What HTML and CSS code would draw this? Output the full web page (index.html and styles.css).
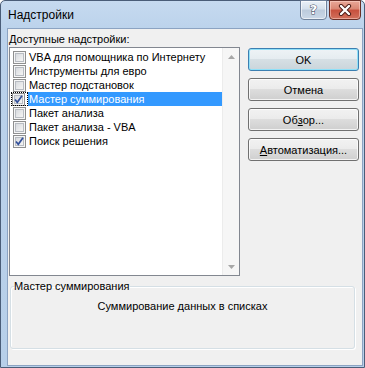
FILE: index.html
```html
<!DOCTYPE html>
<html lang="ru">
<head>
<meta charset="utf-8">
<title>Надстройки</title>
<link rel="stylesheet" href="styles.css">
</head>
<body>
<div class="window">
  <div class="titlebar">
    <span class="title">Надстройки</span>
    <div class="caption-btns">
      <div class="cbtn help"><span class="qmark">?</span></div>
      <div class="cbtn close">
        <svg width="16" height="12" viewBox="0 0 16 12"><path d="M4 2 L12 10 M12 2 L4 10" fill="none" stroke="#4a1a14" stroke-width="4.2" stroke-linecap="round"/><path d="M4 2 L12 10 M12 2 L4 10" fill="none" stroke="#ffffff" stroke-width="2.4" stroke-linecap="round"/></svg>
      </div>
    </div>
  </div>
  <div class="client">
    <div class="top">
      <div class="left">
        <div class="label"><u>Д</u>оступные надстройки:</div>
        <div class="listbox">
          <ul class="items">
            <li class="item"><span class="cb"></span><span class="txt">VBA для помощника по Интернету</span></li>
            <li class="item"><span class="cb"></span><span class="txt">Инструменты для евро</span></li>
            <li class="item"><span class="cb"></span><span class="txt">Мастер подстановок</span></li>
            <li class="item selected"><span class="cbwrap"><span class="cb checked"><svg width="11" height="11" viewBox="0 0 11 11"><path d="M2 5.5 L4.3 8.3 L9 1.8" fill="none" stroke="#33509a" stroke-width="1.7"/></svg></span></span><span class="txt">Мастер суммирования</span></li>
            <li class="item"><span class="cb"></span><span class="txt">Пакет анализа</span></li>
            <li class="item"><span class="cb"></span><span class="txt">Пакет анализа - VBA</span></li>
            <li class="item"><span class="cb checked"><svg width="11" height="11" viewBox="0 0 11 11"><path d="M2 5.5 L4.3 8.3 L9 1.8" fill="none" stroke="#33509a" stroke-width="1.7"/></svg></span><span class="txt">Поиск решения</span></li>
          </ul>
          <div class="scrollbar">
            <div class="arrow up"><svg width="7" height="4" viewBox="0 0 7 4"><path d="M0 4 L3.5 0 L7 4 Z" fill="#a7a7a7"/></svg></div>
            <div class="track"></div>
            <div class="arrow down"><svg width="7" height="4" viewBox="0 0 7 4"><path d="M0 0 L3.5 4 L7 0 Z" fill="#a7a7a7"/></svg></div>
          </div>
        </div>
      </div>
      <div class="buttons">
        <div class="btn default">OK</div>
        <div class="btn">Отмена</div>
        <div class="btn">Об<u>з</u>ор...</div>
        <div class="btn"><u>А</u>втоматизация...</div>
      </div>
    </div>
    <fieldset class="group">
      <legend>Мастер суммирования</legend>
      <p class="desc">Суммирование данных в списках</p>
    </fieldset>
  </div>
</div>
</body>
</html>
```
FILE: styles.css
```css
* { box-sizing: border-box; }
html, body { margin: 0; padding: 0; }
body {
  width: 365px;
  height: 368px;
  overflow: hidden;
  font-family: "Liberation Sans", Arial, sans-serif;
  font-size: 11px;
  color: #000;
}
u { text-decoration: underline; text-underline-offset: 1px; }
.window {
  width: 365px;
  height: 368px;
  border: 1px solid #4a5d78;
  border-radius: 5px 5px 0 0;
  padding: 0 1px 1px 6px;
  background: linear-gradient(to bottom, #c6daf0 0px, #bbd2eb 30px, #b7cfe9 100%);
  display: flex;
  flex-direction: column;
}
.titlebar {
  height: 27px;
  flex: none;
  display: flex;
  align-items: flex-start;
  justify-content: space-between;
}
.title {
  margin-top: 6px;
  margin-left: 1px;
  font-size: 12px;
  line-height: 16px;
}
.caption-btns {
  display: flex;
  gap: 2px;
  margin-top: -1px;
  margin-right: 2px;
}
.cbtn {
  height: 20px;
  border-radius: 0 0 4px 4px;
  display: flex;
  align-items: center;
  justify-content: center;
}
.help {
  width: 27px;
  border: 1px solid #6f829b;
  background: linear-gradient(to bottom, #eaf1f8 0%, #d4e0ec 45%, #bccbdc 50%, #cad8e8 100%);
  box-shadow: inset 0 0 0 1px rgba(255,255,255,0.6);
}
.qmark {
  font-family: "DejaVu Sans", sans-serif;
  font-weight: bold;
  font-size: 13px;
  line-height: 14px;
  color: #fff;
  -webkit-text-stroke: 1px #3d4a5c;
  paint-order: stroke fill;
}
.close {
  width: 32px;
  border: 1px solid #6a2f27;
  background: linear-gradient(to bottom, #e9a898 0%, #d98673 45%, #c7503d 50%, #d1705c 100%);
  box-shadow: inset 0 0 0 1px rgba(255,220,210,0.5);
}
.client {
  flex: 1;
  background: #f0f0f0;
  border: 1px solid #8ca3c2;
  display: flex;
  flex-direction: column;
}
.top {
  display: grid;
  grid-template-columns: 231px 111px;
  column-gap: 8px;
  padding-left: 1px;
}
.label {
  margin-top: 3px;
  height: 15px;
  line-height: 15px;
}
.listbox {
  height: 229px;
  border: 1px solid #828790;
  background: #fff;
  display: flex;
}
.items {
  list-style: none;
  margin: 0;
  padding: 2px 0 0 1px;
  flex: 1;
  min-width: 0;
  overflow: hidden;
}
.item {
  height: 14px;
  display: flex;
  align-items: center;
  line-height: 14px;
}
.cb {
  width: 13px;
  height: 13px;
  margin-left: 2px;
  border: 1px solid #8f8f8f;
  box-shadow: inset 0 0 0 1px #f6f6f6, inset 0 0 0 2px #b8bcc2;
  background-image: linear-gradient(135deg, #cfd3d8 0%, #f0f0f0 70%, #fbfbfb 100%);
  display: flex;
  align-items: center;
  justify-content: center;
  flex: none;
}
.cb.checked svg { display: block; }
.cbwrap {
  display: flex;
  align-items: center;
  height: 14px;
  width: 17px;
  outline: 1px dotted #000;
  outline-offset: -1px;
  flex: none;
}
.cbwrap .cb { margin-left: 1px; }
.item .cb + .txt { margin-left: 2px; }
.txt {
  padding-left: 1px;
  white-space: nowrap;
}
.selected .txt {
  flex: 1;
  background: #3399ff;
  color: #fff;
}
.scrollbar {
  width: 17px;
  flex: none;
  background: #f6f6f6;
  border-left: 1px solid #ececec;
  display: flex;
  flex-direction: column;
}
.arrow {
  height: 17px;
  display: flex;
  align-items: center;
  justify-content: center;
}
.arrow svg { display: block; }
.track { flex: 1; }
.buttons {
  display: flex;
  flex-direction: column;
  gap: 7px;
  padding-top: 19px;
}
.btn {
  height: 23px;
  border: 1px solid #707070;
  border-radius: 3px;
  background: linear-gradient(to bottom, #f2f2f2 0%, #ebebeb 49%, #dddddd 50%, #cfcfcf 100%);
  box-shadow: inset 0 0 0 1px rgba(255,255,255,0.75);
  display: flex;
  align-items: center;
  justify-content: center;
  line-height: 14px;
}
.btn.default {
  border-color: #3c7fb1;
  box-shadow: inset 0 0 0 1px #8fe0f8;
  background: linear-gradient(to bottom, #eef3f6 0%, #e5ecf0 49%, #d6dfe4 50%, #cad5db 100%);
}
.group {
  margin: 3px 0 0 2px;
  width: 345px;
  height: 70px;
  border: 1px solid #d5dfe5;
  border-radius: 3px;
  box-shadow: 1px 1px 0 #fff, inset 1px 1px 0 #fff;
  padding: 0;
}
.group legend {
  padding: 0;
  margin-left: 3px;
  line-height: 14px;
}
.desc {
  margin: 6px 0 0 0;
  text-align: center;
  line-height: 14px;
}
```
